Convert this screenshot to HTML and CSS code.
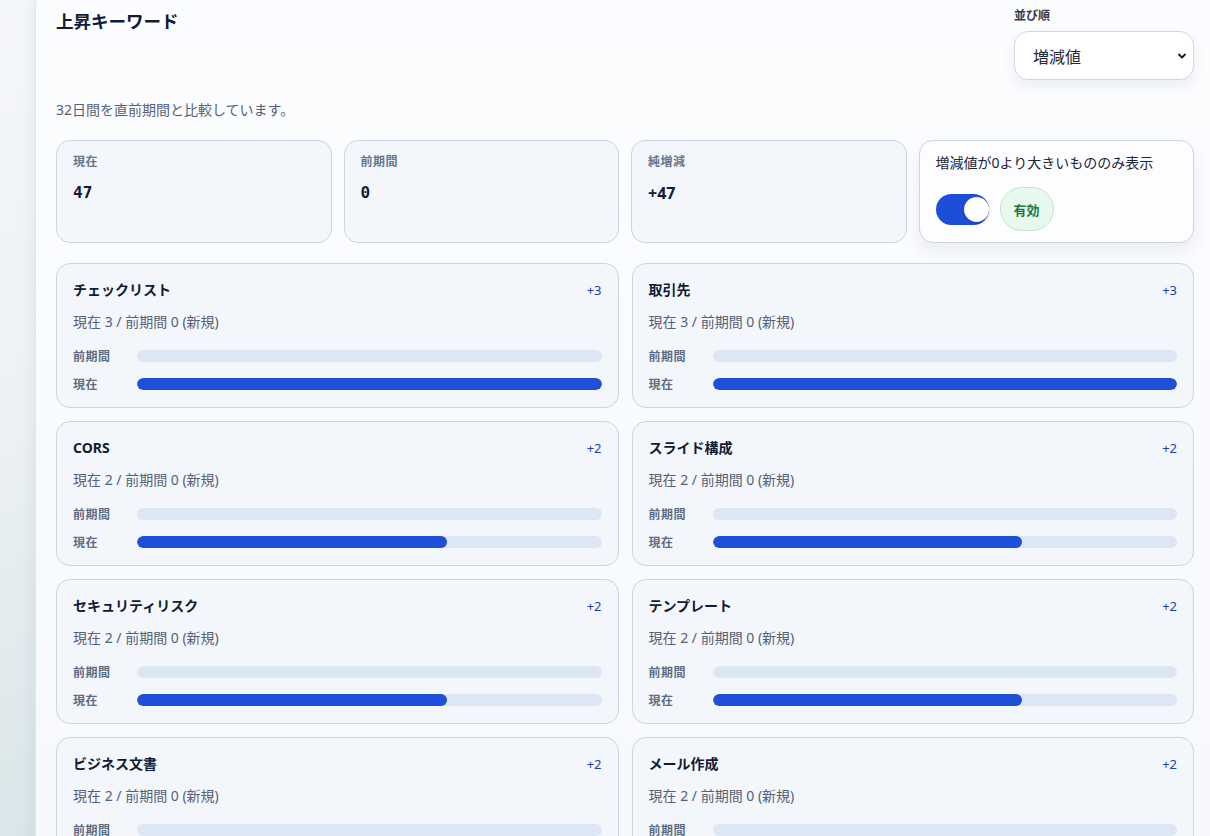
FILE: index.html
```html
<!DOCTYPE HTML>
<html lang="ja">
<head>
  <meta charset="UTF-8">
  <title>上昇キーワード</title>
  <link rel="stylesheet" href="styles.css">
</head>
<body>
  <div class="page">
    <div class="panel">
      <div class="panel-head">
        <h2 class="title">上昇キーワード</h2>
        <div class="sort">
          <label class="sort-label" for="sort">並び順</label>
          <div class="select-wrap">
            <select id="sort" class="select">
              <option>増減値</option>
              <option>現在</option>
              <option>名前</option>
            </select>
            <svg class="chevron" viewBox="0 0 10 10" width="10" height="10"><path d="M2 3.5 L5 6.5 L8 3.5" fill="none" stroke="#111827" stroke-width="1.8" stroke-linecap="round" stroke-linejoin="round"/></svg>
          </div>
        </div>
      </div>
      <p class="subtitle">32日間を直前期間と比較しています。</p>

      <div class="stats">
        <div class="stat">
          <div class="stat-label">現在</div>
          <div class="stat-value mono">47</div>
        </div>
        <div class="stat">
          <div class="stat-label">前期間</div>
          <div class="stat-value mono">0</div>
        </div>
        <div class="stat">
          <div class="stat-label">純増減</div>
          <div class="stat-value">+47</div>
        </div>
        <div class="stat filter">
          <div class="filter-label">増減値が0より大きいもののみ表示</div>
          <div class="filter-row">
            <span class="toggle on"><span class="knob"></span></span>
            <span class="badge">有効</span>
          </div>
        </div>
      </div>

      <div class="keywords" id="keywords"></div>
    </div>
  </div>
  <script>
    const keywords = [
      { name: "チェックリスト", now: 3, prev: 0 },
      { name: "取引先", now: 3, prev: 0 },
      { name: "CORS", now: 2, prev: 0 },
      { name: "スライド構成", now: 2, prev: 0 },
      { name: "セキュリティリスク", now: 2, prev: 0 },
      { name: "テンプレート", now: 2, prev: 0 },
      { name: "ビジネス文書", now: 2, prev: 0 },
      { name: "メール作成", now: 2, prev: 0 }
    ];

    const max = Math.max(...keywords.map(k => Math.max(k.now, k.prev)));
    const list = document.getElementById("keywords");

    keywords.forEach(k => {
      const diff = k.now - k.prev;
      const note = k.prev === 0 ? " (新規)" : "";
      const card = document.createElement("div");
      card.className = "kw";
      card.innerHTML = `
        <div class="kw-head">
          <span class="kw-name">${k.name}</span>
          <span class="kw-diff">${diff > 0 ? "+" : ""}${diff}</span>
        </div>
        <div class="kw-sub">現在 ${k.now} / 前期間 ${k.prev}${note}</div>
        <div class="bars">
          <div class="bar-row">
            <span class="bar-label">前期間</span>
            <span class="bar"><span class="fill prev" style="width:${k.prev / max * 100}%"></span></span>
          </div>
          <div class="bar-row">
            <span class="bar-label">現在</span>
            <span class="bar"><span class="fill" style="width:${k.now / max * 100}%"></span></span>
          </div>
        </div>`;
      list.appendChild(card);
    });
  </script>
</body>
</html>
```

FILE: styles.css
```css
html, body {
  margin: 0;
  padding: 0;
  height: 100%;
  overflow: hidden;
}
body {
  background: linear-gradient(180deg, #f5f7fa 0%, #eef2f5 45%, #dae6e9 100%);
  color: #0f1c33;
  font-family: "Noto Sans", "Noto Sans CJK JP", sans-serif;
}
.page {
  padding-left: 35px;
}
.panel {
  width: 1138px;
  margin-top: -13px;
  padding: 20px;
  background: linear-gradient(180deg, #fcfdff 0%, #f9fafd 60%, #f6f8fb 100%);
  border: 1px solid #e1e5ec;
  border-radius: 18px;
  box-shadow: -4px 0 14px rgba(30, 50, 80, 0.06);
  min-height: 900px;
}
.panel-head {
  display: flex;
  justify-content: space-between;
  align-items: flex-start;
}
.title {
  margin: 0;
  font-size: 17.5px;
  line-height: 26px;
  font-weight: 700;
  color: #0f1c33;
}
.sort {
  width: 180px;
  display: flex;
  flex-direction: column;
}
.sort-label {
  font-size: 12px;
  line-height: 16px;
  font-weight: 700;
  color: #2c3a50;
}
.select-wrap {
  position: relative;
  margin-top: 7px;
}
.select {
  width: 100%;
  height: 49px;
  padding: 0 18px;
  font-family: "Noto Sans CJK JP", sans-serif;
  font-size: 16px;
  color: #1f2937;
  background: #ffffff;
  border: 1px solid #d3d8e0;
  border-radius: 14px;
  box-shadow: 0 6px 14px rgba(30, 50, 80, 0.08);
  appearance: none;
  -webkit-appearance: none;
}
.chevron {
  position: absolute;
  right: 7px;
  top: 20px;
  pointer-events: none;
}
.subtitle {
  margin: 20px 0 0;
  font-size: 14px;
  line-height: 20px;
  color: #566175;
}
.stats {
  margin-top: 20px;
  display: grid;
  grid-template-columns: repeat(4, 1fr);
  gap: 12px;
}
.stat {
  background: #f3f6fb;
  border: 1px solid #cdd4df;
  border-radius: 14px;
  padding: 12px 16px 11px;
}
.stat-label {
  margin-top: 1px;
  font-size: 12px;
  line-height: 16px;
  font-weight: 700;
  color: #66758c;
  letter-spacing: 0.5px;
}
.stat-value {
  margin-top: 13px;
  font-size: 16px;
  line-height: 20px;
  font-weight: 700;
  color: #0f1c33;
}
.mono {
  font-family: "DejaVu Sans Mono", monospace;
}
.filter {
  background: #fdfdff;
  box-shadow: 0 8px 18px rgba(30, 50, 80, 0.08);
}
.filter-label {
  font-size: 14px;
  line-height: 20px;
  color: #1b2638;
}
.filter-row {
  margin-top: 14px;
  display: flex;
  align-items: center;
  gap: 11px;
}
.toggle {
  position: relative;
  width: 53px;
  height: 31px;
  border-radius: 16px;
  background: #1d4ed8;
}
.toggle .knob {
  position: absolute;
  right: 0;
  top: 3px;
  width: 25px;
  height: 25px;
  border-radius: 50%;
  background: #ffffff;
  box-shadow: 0 1px 3px rgba(0, 0, 0, 0.25);
}
.badge {
  display: inline-flex;
  align-items: center;
  justify-content: center;
  width: 52px;
  height: 42px;
  border-radius: 22px;
  background: #e9f8ee;
  border: 1px solid #bfe6cb;
  color: #177a3c;
  font-size: 13px;
  font-weight: 700;
}
.keywords {
  margin-top: 20px;
  display: grid;
  grid-template-columns: 1fr 1fr;
  gap: 13px;
}
.kw {
  background: #f3f6fb;
  border: 1px solid #cdd4df;
  border-radius: 14px;
  padding: 16px 16px 13px;
}
.kw-head {
  display: flex;
  justify-content: space-between;
  align-items: center;
  line-height: 20px;
}
.kw-name {
  font-size: 14px;
  font-weight: 700;
  color: #0f1c33;
}
.kw-diff {
  font-size: 13px;
  color: #1e40af;
}
.kw-sub {
  margin-top: 12px;
  font-size: 14px;
  line-height: 20px;
  color: #566175;
}
.bars {
  margin-top: 14px;
  display: flex;
  flex-direction: column;
  gap: 8px;
}
.bar-row {
  display: flex;
  align-items: center;
  height: 20px;
}
.bar-label {
  width: 64px;
  flex: none;
  font-size: 12px;
  font-weight: 700;
  color: #5d6b80;
  letter-spacing: 0.5px;
}
.bar {
  flex: 1;
  height: 12px;
  border-radius: 6px;
  background: #dce6f5;
  overflow: hidden;
}
.fill {
  display: block;
  height: 100%;
  border-radius: 6px;
  background: #1d4fd7;
}
```
